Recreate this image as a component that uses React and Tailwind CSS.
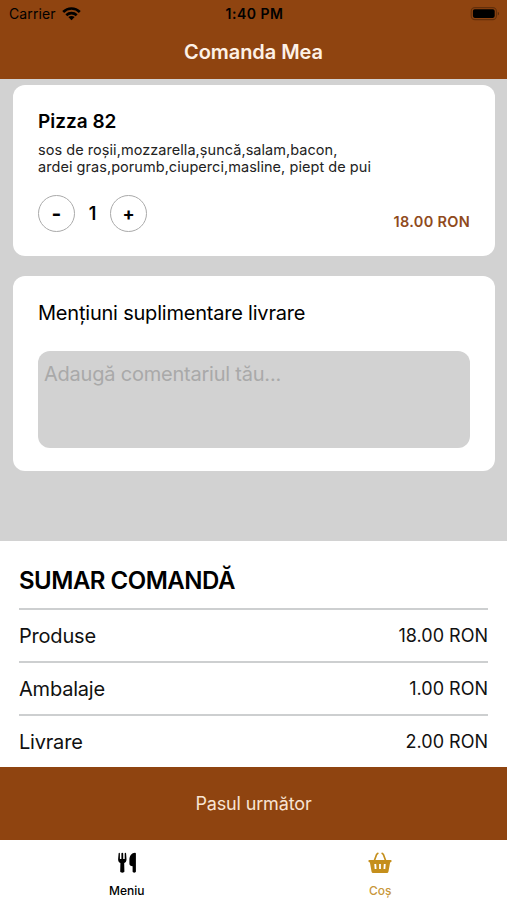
import { useState } from 'react';

const summary = [
  { label: 'Produse', price: '18.00 RON' },
  { label: 'Ambalaje', price: '1.00 RON' },
  { label: 'Livrare', price: '2.00 RON' },
];

function WifiIcon() {
  return (
    <svg width="19" height="14" viewBox="0 0 19 14" fill="none" stroke="#000" strokeWidth="2.6">
      <path d="M1.2 5C5.8 0.4 13.2 0.4 17.8 5" />
      <path d="M4.3 8.2C7.2 5.4 11.8 5.4 14.7 8.2" />
      <path d="M9.5 13.3L6.3 10.1C8.1 8.5 10.9 8.5 12.7 10.1Z" fill="#000" stroke="none" />
    </svg>
  );
}

function BatteryIcon() {
  return (
    <svg width="30" height="14" viewBox="0 0 30 14">
      <rect x="1.2" y="0.6" width="25.2" height="12" rx="3.6" fill="none" stroke="#000" strokeOpacity="0.3" strokeWidth="1.1" />
      <rect x="2.9" y="2.3" width="21.8" height="8.6" rx="1.8" fill="#000" />
      <path d="M27.8 4.8C29.4 5.4 29.4 8 27.8 8.6Z" fill="#000" fillOpacity="0.4" />
    </svg>
  );
}

function CutleryIcon() {
  return (
    <svg width="20" height="22" viewBox="0 0 20 22" fill="#000">
      <path d="M1.6 1.6C1.6 0.6 2.9 0.6 2.9 1.6V7H4.4V1.5C4.4 0.5 6.2 0.5 6.2 1.5V7H7.7V1.6C7.7 0.6 9 0.6 9.1 1.6L9.5 7.2C9.5 9.2 8.7 10.4 7.2 11L7.4 19.6C7.4 21.1 3.2 21.1 3.2 19.6L3.4 11C1.9 10.4 1.1 9.2 1.1 7.2Z" />
      <path d="M18.9 1.5V19.6C18.9 21.1 15.6 21.1 15.6 19.6V14.2C13.6 14.2 12.4 13.2 12.4 11.4V7.8C12.4 3.8 14.8 0.7 18 0.7C18.5 0.7 18.9 1 18.9 1.5Z" />
    </svg>
  );
}

function BasketIcon() {
  return (
    <svg width="24" height="22" viewBox="0 0 24 22">
      <path d="M6.3 8.8L8.7 2.3L9.8 1.4M17.7 8.8L15.3 2.3L14.2 1.4" stroke="#c58f1c" strokeWidth="1.7" strokeLinecap="round" strokeLinejoin="round" fill="none" />
      <path
        fill="#c58f1c"
        fillRule="evenodd"
        d="M1.3 7.9H22.7C23.3 7.9 23.6 8.3 23.6 8.8C23.6 9.9 23 10.3 22.1 10.5L20.5 19.4C20.2 20.6 19.6 21 18.6 21H5.4C4.4 21 3.8 20.6 3.5 19.4L1.9 10.5C1 10.3 0.4 9.9 0.4 8.8C0.4 8.3 0.7 7.9 1.3 7.9ZM6.3 12L6.7 17H8.5L8.2 12ZM11.1 12V17H12.9V12ZM15.8 12L15.5 17H17.3L17.7 12Z"
      />
    </svg>
  );
}

export default function App() {
  const [count, setCount] = useState(1);
  const [comment, setComment] = useState('');

  return (
    <div className="flex h-[900px] w-[507px] flex-col overflow-hidden bg-[#d2d2d2] font-['Inter',sans-serif] text-black">
      <header className="h-[79px] shrink-0 bg-[#8f4410]">
        <div className="grid h-[27px] grid-cols-3 items-center pr-[7px] pl-[9px] text-[14px]">
          <div className="flex items-center gap-[6px]">
            <span className="tracking-[0.1px]">Carrier</span>
            <WifiIcon />
          </div>
          <span className="text-center font-semibold tracking-[0.5px]">1:40 PM</span>
          <div className="flex justify-end">
            <BatteryIcon />
          </div>
        </div>
        <h1 className="pt-[11px] text-center text-[20px] leading-[28px] font-semibold tracking-[-0.05px] text-[#fdf1e6]">
          Comanda Mea
        </h1>
      </header>

      <main className="flex h-[462px] shrink-0 flex-col gap-5 pt-[6px] pr-[12px] pl-[13px]">
        <section className="h-[171px] rounded-xl bg-white px-[25px] pt-[25px]">
          <h2 className="text-[19px] leading-[24px] font-semibold">Pizza 82</h2>
          <p className="mt-[7px] text-[14.5px] leading-[17px] tracking-[0.05px] whitespace-pre text-[#222]">
            {'sos de roșii,mozzarella,șuncă,salam,bacon,\nardei gras,porumb,ciuperci,masline, piept de pui'}
          </p>
          <div className="mt-[20px] flex items-start justify-between">
            <div className="flex items-center">
              <button
                className="flex size-[37px] items-center justify-center rounded-full border-[1.5px] border-[#aaa] pt-px text-[21px] font-bold"
                onClick={() => setCount(Math.max(1, count - 1))}
              >
                -
              </button>
              <span className="w-[35px] text-center text-[18px] font-semibold">{count}</span>
              <button
                className="flex size-[37px] items-center justify-center rounded-full border-[1.5px] border-[#aaa] text-[18px] font-bold"
                onClick={() => setCount(count + 1)}
              >
                +
              </button>
            </div>
            <span className="pt-[18px] text-[14.5px] leading-[18px] font-semibold tracking-[0.3px] text-[#8f4a1c]">
              18.00 RON
            </span>
          </div>
        </section>

        <section className="h-[195px] rounded-xl bg-white px-[25px] pt-[24px]">
          <h2 className="text-[20px] leading-[26px] tracking-[-0.21px]">Mențiuni suplimentare livrare</h2>
          <textarea
            className="mt-[25px] block h-[97px] w-[432px] resize-none rounded-xl bg-[#d2d2d2] px-[6px] pt-[10px] text-[20px] leading-[26px] tracking-[-0.22px] outline-none placeholder:text-[#a9a9a9]"
            placeholder="Adaugă comentariul tău..."
            value={comment}
            onChange={(e) => setComment(e.target.value)}
          />
        </section>
      </main>

      <section className="h-[226px] shrink-0 bg-white px-[19px] pt-[24px]">
        <h2 className="h-[43px] pt-px text-[24px] leading-[30px] font-semibold tracking-[-0.5px]">SUMAR COMANDĂ</h2>
        {summary.map((row) => (
          <div
            key={row.label}
            className="flex h-[53px] items-center justify-between border-t-2 border-[#cdcfd0] text-[#111]"
          >
            <span className="text-[20px] tracking-[-0.2px]">{row.label}</span>
            <span className="text-[18px]">{row.price}</span>
          </div>
        ))}
      </section>

      <button className="h-[73px] shrink-0 bg-[#8f4410] text-[18px] tracking-[-0.15px] text-[#f8e4d3]">
        Pasul următor
      </button>

      <nav className="grid h-[60px] shrink-0 grid-cols-2 bg-white text-[12px] font-medium">
        <a className="flex flex-col items-center pt-[12px]">
          <CutleryIcon />
          <span className="mt-[9px] leading-[16px]">Meniu</span>
        </a>
        <a className="flex flex-col items-center pt-[12px] text-[#c8973a]">
          <BasketIcon />
          <span className="mt-[9px] leading-[16px]">Coș</span>
        </a>
      </nav>
    </div>
  );
}
